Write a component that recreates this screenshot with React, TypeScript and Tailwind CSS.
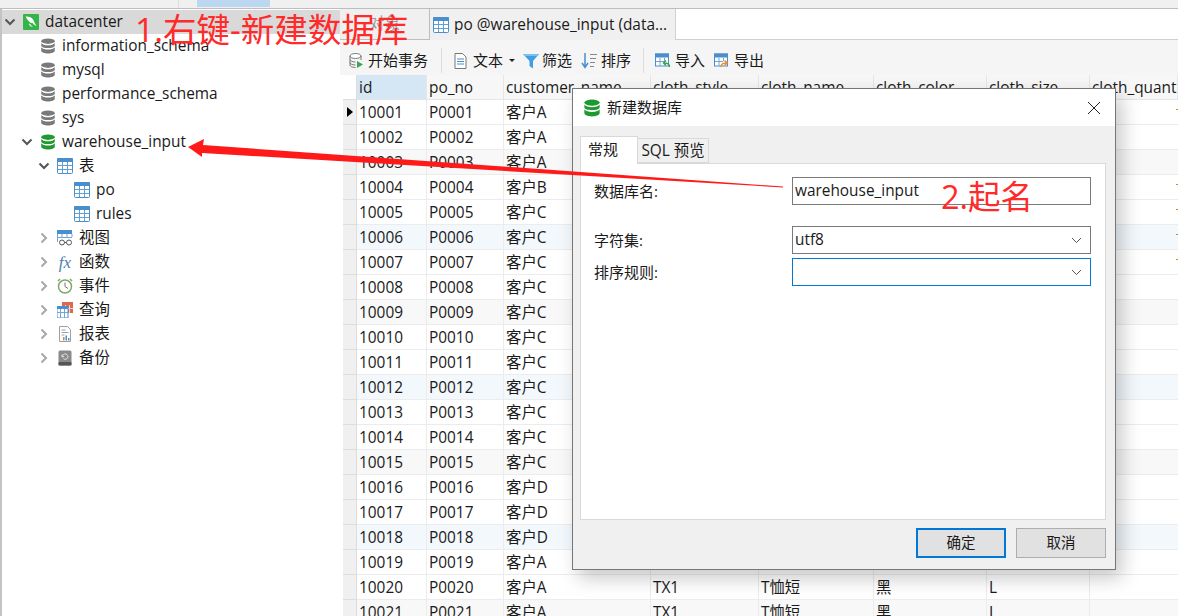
import type { ReactNode } from "react";

const Chevron = ({ open }: { open?: boolean }) => (
  <svg width="14" height="14" viewBox="0 0 14 14" fill="none" strokeWidth="2" stroke={open ? "#555555" : "#a8a8a8"}>
    {open ? <path d="M2.500 4.500 7 9l4.500-4.500" /> : <path d="M4.500 2.500 9 7l-4.500 4.500" />}
  </svg>
);

const DbIcon = ({ color = "#7a7a7a", size = 16 }: { color?: string; size?: number }) => (
  <svg width={size} height={size} viewBox="0 0 16 16" fill={color}>
    <ellipse cx="8" cy="3.200" rx="6.800" ry="2.700" />
    <path d="M1.200 4.900c1 1.700 3.800 2.400 6.800 2.400s5.800-.7 6.800-2.400v2.500C14.800 9 11.600 10 8 10S1.200 9 1.200 7.400z" />
    <path d="M1.200 9.200c1 1.700 3.800 2.400 6.800 2.400s5.800-.7 6.800-2.400v3.300C14.800 14.400 11.600 15.500 8 15.500S1.200 14.400 1.200 12.500z" />
  </svg>
);

const TableIcon = ({ size = 16 }: { size?: number }) => (
  <svg width={size} height={size} viewBox="0 0 16 16">
    <rect x="0.500" y="0.500" width="15" height="15" rx="1" fill="#ffffff" stroke="#4a8fcb" />
    <rect x="0" y="0" width="16" height="4" rx="1" fill="#4a8fcb" />
    <path d="M5.500 4v11M10.500 4v11M1 7.500h14M1 11.500h14" stroke="#5f9fd6" strokeWidth="1" />
  </svg>
);

const MysqlIcon = () => (
  <svg width="16" height="16" viewBox="0 0 16 16">
    <rect width="16" height="16" rx="1" fill="#35b44a" />
    <path d="M2.500 2.500c3-.5 6 .5 7.500 3 1 1.700 1.500 3.500 3.500 6.500-1.500-.8-3-1.500-4-3-1 0-2.500-.5-3.500-1.500C5 6.500 3.500 4.500 2.500 2.500z" fill="#ffffff" />
    <path d="M7 9.500c.5 1.500 1.500 2.500 3 3.500-1.800 0-3.500-1-4-3z" fill="#ffffff" />
  </svg>
);

const ViewIcon = () => (
  <svg width="16" height="16" viewBox="0 0 16 16" fill="none">
    <rect x="0" y="0" width="15" height="4" fill="#4a8fcb" />
    <path d="M.5 4v8M5 4v4M10 4v3M15 4v3M.5 7.500H15" stroke="#6ea6d8" />
    <circle cx="5" cy="12.500" r="2.500" stroke="#555555" />
    <circle cx="12" cy="12.500" r="2.500" stroke="#555555" />
    <path d="M7.500 12.500h2" stroke="#555555" />
  </svg>
);

const FxIcon = () => (
  <span className="w-4 text-center font-['Liberation_Serif',serif] italic text-[17px] leading-none text-[#4a7fb0]">fx</span>
);

const ClockIcon = () => (
  <svg width="16" height="16" viewBox="0 0 16 16" fill="none">
    <circle cx="8" cy="8.500" r="6.500" fill="#ffffff" stroke="#7fa96a" strokeWidth="1.500" />
    <path d="M8 4.500v4l3 2" stroke="#8a6a6a" />
    <path d="M1 3l2-2M15 3l-2-2" stroke="#7fa96a" strokeWidth="1.500" />
  </svg>
);

const QueryIcon = () => (
  <svg width="16" height="16" viewBox="0 0 16 16" fill="none">
    <rect x="5" y="0" width="11" height="11" fill="#d9694f" />
    <path d="M8.500 3v8M12.500 3v8M5 6.500h11" stroke="#f6d5cc" />
    <rect x="0" y="4.500" width="11" height="11.500" fill="#ffffff" stroke="#4a8fcb" />
    <rect x="0" y="4" width="11" height="3" fill="#4a8fcb" />
    <path d="M3.500 7v9M7.500 7v9M0 10.500h11" stroke="#6ea6d8" />
  </svg>
);

const ReportIcon = () => (
  <svg width="16" height="16" viewBox="0 0 16 16" fill="none">
    <path d="M2.500.5h8l3 3v12h-11z" fill="#ffffff" stroke="#a0a0a0" />
    <path d="M4.500 4h4M4.500 6.500h7M4.500 9h3" stroke="#a0a0a0" />
    <path d="M6 11h1.500v3.500H6z" fill="#e0813f" />
    <path d="M8.500 9.500H10v5H8.500z" fill="#4a8fcb" />
    <path d="M11 12h1.500v2.500H11z" fill="#4a8fcb" />
  </svg>
);

const BackupIcon = () => (
  <svg width="16" height="16" viewBox="0 0 16 16" fill="none">
    <rect x="1.500" y="0.500" width="13" height="15" rx="1.500" fill="#8a8a8a" />
    <rect x="1.500" y="12" width="13" height="3.500" rx="1" fill="#555555" />
    <path d="M5.500 6.500a2.700 2.700 0 1 1 1 2.200M5 4.500v2.200h2.200" stroke="#e6e6e6" />
  </svg>
);

const indents = ["pl-[1px]", "pl-[18px]", "pl-[35px]", "pl-[52px]"];

const TreeRow = ({ level, open, leaf, icon, label, selected }: { level: number; open?: boolean; leaf?: boolean; icon: ReactNode; label: string; selected?: boolean }) => (
  <div className={`flex h-6 items-center ${indents[level]} ${selected ? "bg-[#d9d9d9]" : ""}`}>
    <span className="flex w-[20px] shrink-0 items-center">{!leaf && <Chevron open={open} />}</span>
    {icon}
    <span className="ml-[6px] whitespace-nowrap">{label}</span>
  </div>
);

const Sidebar = () => (
  <aside className="h-full w-[340px] shrink-0 border-l-2 border-l-[#c4c4c4] bg-white pt-px text-[15.4px] text-[#1a1a1a]">
    <TreeRow level={0} open selected icon={<MysqlIcon />} label="datacenter" />
    <TreeRow level={1} leaf icon={<DbIcon />} label="information_schema" />
    <TreeRow level={1} leaf icon={<DbIcon />} label="mysql" />
    <TreeRow level={1} leaf icon={<DbIcon />} label="performance_schema" />
    <TreeRow level={1} leaf icon={<DbIcon />} label="sys" />
    <TreeRow level={1} open icon={<DbIcon color="#1f9a31" />} label="warehouse_input" />
    <TreeRow level={2} open icon={<TableIcon />} label="表" />
    <TreeRow level={3} leaf icon={<TableIcon />} label="po" />
    <TreeRow level={3} leaf icon={<TableIcon />} label="rules" />
    <TreeRow level={2} icon={<ViewIcon />} label="视图" />
    <TreeRow level={2} icon={<FxIcon />} label="函数" />
    <TreeRow level={2} icon={<ClockIcon />} label="事件" />
    <TreeRow level={2} icon={<QueryIcon />} label="查询" />
    <TreeRow level={2} icon={<ReportIcon />} label="报表" />
    <TreeRow level={2} icon={<BackupIcon />} label="备份" />
  </aside>
);

const ToolItem = ({ icon, label, className }: { icon: ReactNode; label: string; className: string }) => (
  <div className={`flex items-center ${className}`}>
    {icon}
    <span className="whitespace-nowrap">{label}</span>
  </div>
);

const Toolbar = () => (
  <div className="flex h-[35px] shrink-0 items-center bg-[#f5f5f5] pl-[9px] pt-[6px] text-[15px] text-[#1a1a1a]">
    <ToolItem
      className="w-[92px] gap-[4px]"
      label="开始事务"
      icon={
        <svg width="15" height="16" viewBox="0 0 15 16" fill="none">
          <ellipse cx="6.500" cy="3" rx="5.500" ry="2.500" fill="#ffffff" stroke="#777777" />
          <path d="M1 3v9c0 1.500 2.500 2.500 5.500 2.500M12 3v4M1 6.500c0 1.400 2.500 2.500 5.500 2.500M1 9.500c0 1.400 2.500 2.500 5.500 2.500" stroke="#777777" />
          <path d="M8 8l6 3.500L8 15z" fill="#3aa655" />
        </svg>
      }
    />
    <div className="h-[25px] w-px bg-[#dcdcdc]" />
    <ToolItem
      className="ml-[11px] gap-[5px]"
      label="文本"
      icon={
        <svg width="15" height="16" viewBox="0 0 15 16" fill="none">
          <path d="M2 .5h7.500L13 4v11.500H2z" fill="#ffffff" stroke="#777777" />
          <path d="M4 6h7M4 8.500h7M4 11h7" stroke="#4a8fcb" />
        </svg>
      }
    />
    <span className="ml-[6px] h-0 w-0 border-x-[3px] border-t-[3px] border-x-transparent border-t-[#222222]" />
    <ToolItem
      className="ml-[8px] gap-[3px]"
      label="筛选"
      icon={
        <svg width="16" height="16" viewBox="0 0 16 16">
          <path d="M0 1h16L10 8v7.500L6.500 13V8z" fill="#3f9fe0" />
          <path d="M0 1h16l-1.500 2h-13z" fill="#7cc1ee" />
        </svg>
      }
    />
    <ToolItem
      className="ml-[9px] gap-[4px]"
      label="排序"
      icon={
        <svg width="16" height="16" viewBox="0 0 16 16" fill="none">
          <path d="M4 0v13M1 10l3 4.500L7 10" stroke="#4a8fcb" strokeWidth="1.500" />
          <path d="M9 1.500h7M9 5.500h6M9 9.500h5M9 13.500h4" stroke="#888888" />
        </svg>
      }
    />
    <div className="ml-[12px] h-[25px] w-px bg-[#dcdcdc]" />
    <ToolItem
      className="ml-[11px] gap-[5px]"
      label="导入"
      icon={
        <svg width="15" height="16" viewBox="0 0 15 16" fill="none">
          <rect x="0.500" y="1" width="13" height="12" fill="#ffffff" stroke="#4a8fcb" />
          <rect x="0" y="0.500" width="14" height="4" fill="#4a8fcb" />
          <path d="M5 5v8M9.500 5v3M1 8.500h8" stroke="#6ea6d8" />
          <path d="M14.500 14c0-3-2-4-5-4M11 7.500 8.500 10l2.500 2.500" stroke="#3aa655" strokeWidth="1.500" />
        </svg>
      }
    />
    <ToolItem
      className="ml-[9px] gap-[5px]"
      label="导出"
      icon={
        <svg width="15" height="16" viewBox="0 0 15 16" fill="none">
          <rect x="0.500" y="1" width="13" height="12" fill="#ffffff" stroke="#4a8fcb" />
          <rect x="0" y="0.500" width="14" height="4" fill="#4a8fcb" />
          <path d="M5 5v8M9.500 5v3M1 8.500h8" stroke="#6ea6d8" />
          <path d="M7 14c0-3 2-4 5-4M10.500 7.500 13 10l-2.500 2.500" stroke="#e8912d" strokeWidth="1.500" />
        </svg>
      }
    />
  </div>
);

const columns = ["id", "po_no", "customer_name", "cloth_style", "cloth_name", "cloth_color", "cloth_size", "cloth_quantity"];
const customers = "AAABCCCCCCCCCCCDDDAAA".split("");
const quantityMarks = [1, 4, 5, 6, 7];
const rowGrid = "grid grid-cols-[14px_70px_77px_147px_108px_115px_113px_103px_1fr]";

const rowTint = (n: number) => {
  if (n % 6 === 0) return "bg-[#f3f8fd]";
  if (n % 3 === 0) return "bg-[#f8f8f8]";
  return "bg-white";
};

const Cell = ({ children }: { children?: ReactNode }) => (
  <div className="overflow-hidden whitespace-nowrap border-r border-b border-[#ececec] pl-[2px] pt-px leading-[23px]">{children}</div>
);

const DataTable = () => (
  <div className="ml-[3px] text-[15.4px] text-[#1a1a1a]">
    <div className={`${rowGrid} h-[25px] bg-[#f7f7f7]`}>
      <div className="border-r border-b border-[#dddddd] bg-white" />
      {columns.map((c, i) => (
        <div key={c} className={`overflow-hidden whitespace-nowrap border-r border-b border-[#e6e6e6] pl-[2px] pt-px leading-[23px] ${i === 0 ? "bg-[#d5e6f5]" : ""}`}>
          {c}
        </div>
      ))}
    </div>
    {customers.map((customer, i) => {
      const n = i + 1;
      const no = String(n).padStart(2, "0");
      return (
        <div key={n} className={`${rowGrid} h-[25px] ${rowTint(n)}`}>
          <div className="flex items-center justify-center border-r border-b border-[#dddddd] bg-[#f0f0f0]">
            {n === 1 && <span className="h-0 w-0 border-y-[5px] border-l-[6px] border-y-transparent border-l-black" />}
          </div>
          <Cell>{`100${no}`}</Cell>
          <Cell>{`P00${no}`}</Cell>
          <Cell>{`客户${customer}`}</Cell>
          <Cell>TX1</Cell>
          <Cell>T恤短</Cell>
          <Cell>黑</Cell>
          <Cell>L</Cell>
          <div className="relative border-b border-[#ececec]">
            {quantityMarks.includes(n) && <span className="absolute right-0 top-[9px] h-px w-[2px] bg-[#d9822b]" />}
          </div>
        </div>
      );
    })}
  </div>
);

const Field = ({ label, value, focused, select, className }: { label: string; value?: string; focused?: boolean; select?: boolean; className: string }) => (
  <div className={`flex items-center ${className}`}>
    <span className="w-[198px] shrink-0">{label}</span>
    <div className={`flex h-[28px] w-[299px] items-center justify-between border bg-white pl-[2px] pr-[8px] ${focused ? "border-[#0078d7]" : "border-[#7a7a7a]"}`}>
      <span className="text-[15.4px]">{value}</span>
      {select && (
        <svg width="11" height="7" viewBox="0 0 11 7" fill="none" stroke="#555555">
          <path d="M1 1l4.500 4.500L10 1" />
        </svg>
      )}
    </div>
  </div>
);

const Dialog = () => (
  <div className="absolute left-[572px] top-[88px] flex h-[482px] w-[544px] flex-col border border-[#777777] bg-[#f0f0f0] text-[15px] text-[#1a1a1a] shadow-[6px_8px_18px_rgba(0,0,0,0.22)]">
    <div className="flex h-[37px] shrink-0 items-center justify-between bg-white pl-[10px] pr-[14px]">
      <div className="flex items-center gap-[6px]">
        <DbIcon color="#1f9a31" size={18} />
        新建数据库
      </div>
      <svg width="14" height="14" viewBox="0 0 14 14" fill="none" stroke="#222222">
        <path d="M1 1l12 12M13 1 1 13" />
      </svg>
    </div>
    <div className="flex items-end pl-[7px] pt-[10px]">
      <div className="relative z-10 -mb-px flex h-[28px] w-[58px] items-center border border-b-0 border-[#d9d9d9] bg-white pb-[3px] pl-[7px]">常规</div>
      <div className="flex h-[25px] w-[71px] items-center justify-center border border-l-0 border-[#d9d9d9] pt-[1px] text-[15.4px]">SQL 预览</div>
    </div>
    <div className="ml-[7px] h-[357px] w-[526px] border border-[#d9d9d9] bg-white pl-[13px] pt-[13px]">
      <Field label="数据库名:" value="warehouse_input" className="" />
      <Field label="字符集:" value="utf8" select className="mt-[21px]" />
      <Field label="排序规则:" focused select className="mt-[4px]" />
    </div>
    <div className="flex justify-end gap-[10px] pr-[9px] pt-[8px]">
      <button className="h-[30px] w-[90px] border-2 border-[#0078d7] bg-[#e1e1e1] text-[14.500px]">确定</button>
      <button className="h-[30px] w-[90px] border border-[#adadad] bg-[#e1e1e1] text-[14.500px]">取消</button>
    </div>
  </div>
);

export default function App() {
  return (
    <div className="relative flex h-[616px] w-[1178px] flex-col overflow-hidden bg-white font-['Open_Sans','Noto_Sans_CJK_SC',sans-serif]">
      <div className="flex h-[9px] shrink-0 border-b border-[#bdbdbd] bg-[#f0f0f0]">
        <div className="ml-[178px] h-full w-px bg-[#dddddd]" />
        <div className="ml-[18px] h-[7px] w-[73px] bg-[#bcd8f0]" />
      </div>
      <div className="flex min-h-0 flex-1">
        <Sidebar />
        <main className="flex min-w-0 flex-1 flex-col">
          <div className="flex h-[31px] shrink-0 items-stretch text-[15.4px]">
            <div className="flex w-[90px] items-center justify-center border-r border-b border-[#bdbdbd] bg-[#f0f0f0] text-[#9a9a9a]">对象</div>
            <div className="flex w-[245px] items-center gap-[4px] bg-[#f0f0f0] pl-[3px] text-[#1a1a1a]">
              <TableIcon />
              <span className="ml-[1px] whitespace-nowrap">po @warehouse_input (data...</span>
            </div>
            <div className="flex-1 border-b border-l border-[#d0d0d0] bg-white" />
          </div>
          <Toolbar />
          <DataTable />
        </main>
      </div>

      <Dialog />

      <svg className="pointer-events-none absolute left-0 top-0" width="1178" height="616" viewBox="0 0 1178 616">
        <polygon points="188,147 204,139 203,145 783,186.500 783,187.500 202,153 202,157" fill="#ff1a1a" />
      </svg>
      <span className="pointer-events-none absolute left-[135px] top-[8px] whitespace-nowrap text-[33.500px] leading-[42px] text-[#ff2a2a]">1.右键-新建数据库</span>
      <span className="pointer-events-none absolute left-[941px] top-[176px] whitespace-nowrap text-[32.500px] leading-[42px] text-[#ff2a2a]">2.起名</span>
    </div>
  );
}
